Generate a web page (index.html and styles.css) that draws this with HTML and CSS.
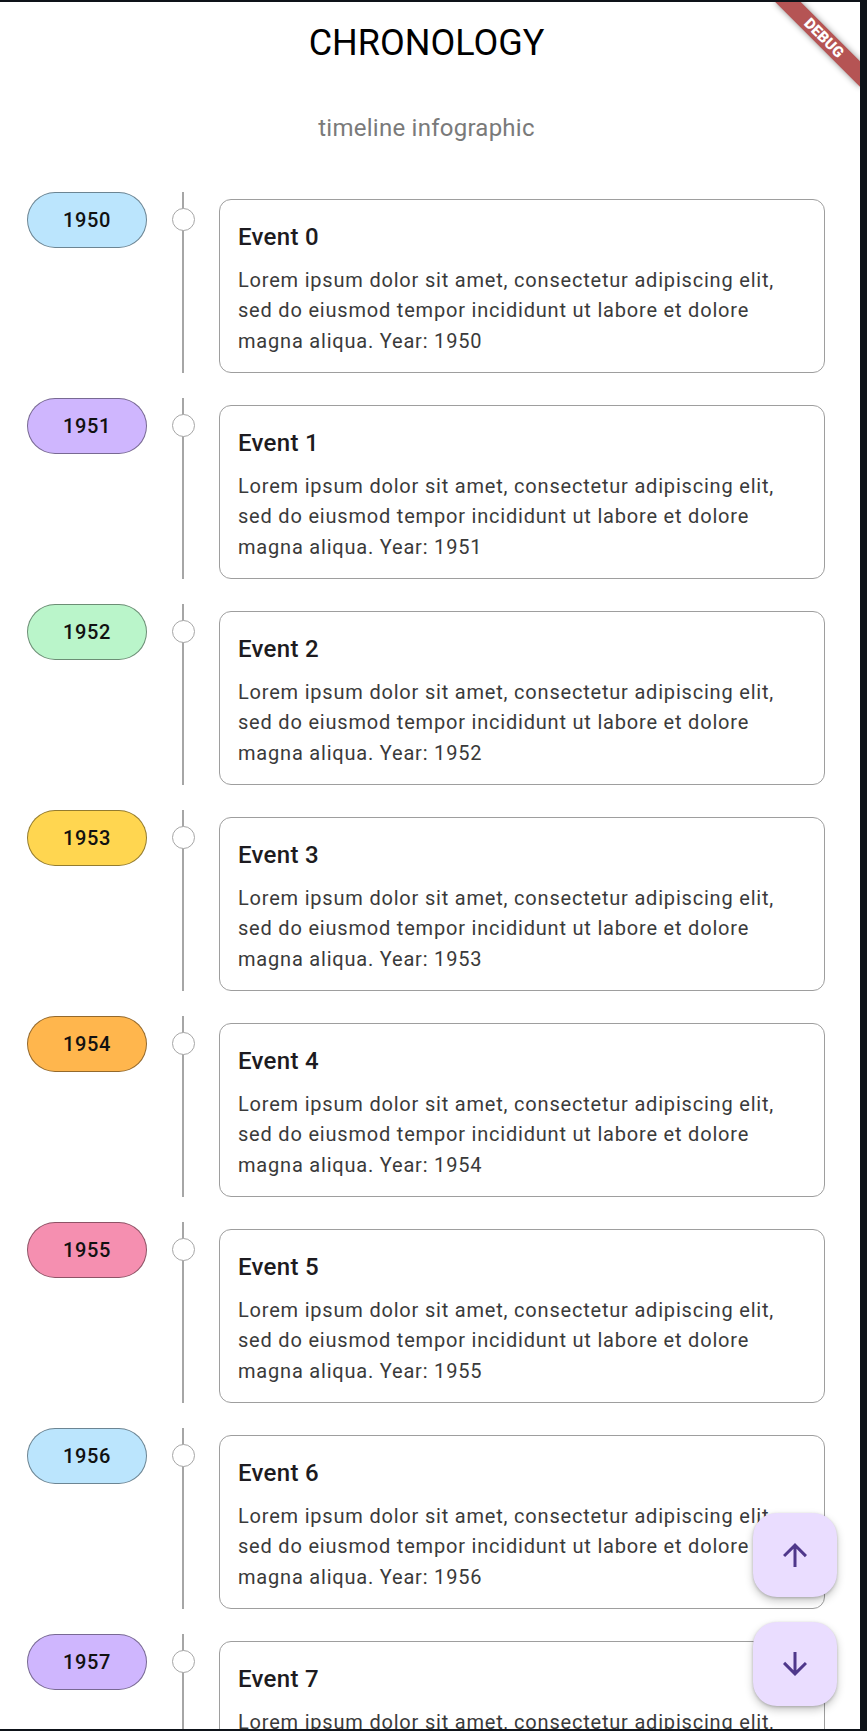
FILE: index.html
```html
<!DOCTYPE html>
<html lang="en">
<head>
<meta charset="utf-8">
<title>Chronology</title>
<link rel="stylesheet" href="styles.css">
</head>
<body>
<div class="app">
  <header class="header">
    <h1 class="title">CHRONOLOGY</h1>
    <p class="subtitle">timeline infographic</p>
  </header>

  <ul class="timeline">
    <li class="row">
      <div class="pill pill-blue">1950</div>
      <div class="axis"><span class="dot"></span></div>
      <article class="card">
        <h2 class="card-title">Event 0</h2>
        <p class="card-text">Lorem ipsum dolor sit amet, consectetur adipiscing elit, sed do eiusmod tempor incididunt ut labore et dolore magna aliqua. Year: 1950</p>
      </article>
    </li>
    <li class="row">
      <div class="pill pill-purple">1951</div>
      <div class="axis"><span class="dot"></span></div>
      <article class="card">
        <h2 class="card-title">Event 1</h2>
        <p class="card-text">Lorem ipsum dolor sit amet, consectetur adipiscing elit, sed do eiusmod tempor incididunt ut labore et dolore magna aliqua. Year: 1951</p>
      </article>
    </li>
    <li class="row">
      <div class="pill pill-green">1952</div>
      <div class="axis"><span class="dot"></span></div>
      <article class="card">
        <h2 class="card-title">Event 2</h2>
        <p class="card-text">Lorem ipsum dolor sit amet, consectetur adipiscing elit, sed do eiusmod tempor incididunt ut labore et dolore magna aliqua. Year: 1952</p>
      </article>
    </li>
    <li class="row">
      <div class="pill pill-amber">1953</div>
      <div class="axis"><span class="dot"></span></div>
      <article class="card">
        <h2 class="card-title">Event 3</h2>
        <p class="card-text">Lorem ipsum dolor sit amet, consectetur adipiscing elit, sed do eiusmod tempor incididunt ut labore et dolore magna aliqua. Year: 1953</p>
      </article>
    </li>
    <li class="row">
      <div class="pill pill-orange">1954</div>
      <div class="axis"><span class="dot"></span></div>
      <article class="card">
        <h2 class="card-title">Event 4</h2>
        <p class="card-text">Lorem ipsum dolor sit amet, consectetur adipiscing elit, sed do eiusmod tempor incididunt ut labore et dolore magna aliqua. Year: 1954</p>
      </article>
    </li>
    <li class="row">
      <div class="pill pill-pink">1955</div>
      <div class="axis"><span class="dot"></span></div>
      <article class="card">
        <h2 class="card-title">Event 5</h2>
        <p class="card-text">Lorem ipsum dolor sit amet, consectetur adipiscing elit, sed do eiusmod tempor incididunt ut labore et dolore magna aliqua. Year: 1955</p>
      </article>
    </li>
    <li class="row">
      <div class="pill pill-blue">1956</div>
      <div class="axis"><span class="dot"></span></div>
      <article class="card">
        <h2 class="card-title">Event 6</h2>
        <p class="card-text">Lorem ipsum dolor sit amet, consectetur adipiscing elit, sed do eiusmod tempor incididunt ut labore et dolore magna aliqua. Year: 1956</p>
      </article>
    </li>
    <li class="row">
      <div class="pill pill-purple">1957</div>
      <div class="axis"><span class="dot"></span></div>
      <article class="card">
        <h2 class="card-title">Event 7</h2>
        <p class="card-text">Lorem ipsum dolor sit amet, consectetur adipiscing elit, sed do eiusmod tempor incididunt ut labore et dolore magna aliqua. Year: 1957</p>
      </article>
    </li>
  </ul>

  <div class="fabs">
    <button class="fab" aria-label="Scroll up">
      <svg class="fab-icon" viewBox="0 0 24 24"><path d="M4 12l1.41 1.41L11 7.83V20h2V7.83l5.58 5.59L20 12l-8-8-8 8z"/></svg>
    </button>
    <button class="fab" aria-label="Scroll down">
      <svg class="fab-icon" viewBox="0 0 24 24"><path d="M20 12l-1.41-1.41L13 16.17V4h-2v12.17l-5.58-5.59L4 12l8 8 8-8z"/></svg>
    </button>
  </div>

  <div class="debug-banner"><span>DEBUG</span></div>
</div>
</body>
</html>
```

FILE: styles.css
```css
html, body {
  margin: 0;
  padding: 0;
}

body {
  background: #0e1319;
  overflow: hidden;
  font-family: Roboto, "Noto Sans", "Liberation Sans", sans-serif;
}

.app {
  position: relative;
  width: 860px;
  height: 1727px;
  margin-top: 2px;
  background: #ffffff;
  overflow: hidden;
}

.header {
  padding: 19px 7px 0 0;
  text-align: center;
}

.title {
  margin: 0;
  font-size: 36px;
  line-height: 44px;
  font-weight: 400;
  color: #000000;
}

.subtitle {
  margin: 47px 0 0;
  font-size: 24px;
  line-height: 32px;
  letter-spacing: 0.25px;
  color: #7a7a7a;
}

.timeline {
  list-style: none;
  margin: 48px 0 0;
  padding: 0 35px 0 27px;
  display: flex;
  flex-direction: column;
  gap: 24.75px;
}

.row {
  display: flex;
  align-items: flex-start;
}

.pill {
  flex: none;
  box-sizing: border-box;
  width: 120px;
  height: 56px;
  border-radius: 28px;
  border: 1.5px solid rgba(0, 0, 0, 0.42);
  display: flex;
  align-items: center;
  justify-content: center;
  font-size: 20px;
  font-weight: 500;
  letter-spacing: 0.6px;
  color: #111111;
}

.pill-blue { background: #bbe5fd; }
.pill-purple { background: #cfb6fe; }
.pill-green { background: #baf5ca; }
.pill-amber { background: #ffd650; }
.pill-orange { background: #ffb64d; }
.pill-pink { background: #f58fb0; }

.axis {
  flex: none;
  align-self: stretch;
  width: 72px;
  display: flex;
  justify-content: center;
  background: linear-gradient(#a6a6a6, #a6a6a6) center / 2px 100% no-repeat;
}

.dot {
  box-sizing: border-box;
  width: 23px;
  height: 23px;
  margin-top: 16px;
  border-radius: 50%;
  background: #ffffff;
  border: 1.5px solid #a6a6a6;
}

.card {
  flex: 1;
  margin-top: 7px;
  padding: 21px 24px 16px 18px;
  border: 1px solid #9e9e9e;
  border-radius: 12px;
  background: #ffffff;
}

.card-title {
  margin: 0;
  font-size: 24px;
  line-height: 32px;
  font-weight: 500;
  letter-spacing: 0.3px;
  color: #1d1b20;
}

.card-text {
  margin: 12px 0 0;
  font-size: 20px;
  line-height: 30.4px;
  letter-spacing: 0.8px;
  color: #3a3a3a;
}

.fabs {
  position: absolute;
  right: 23px;
  bottom: 23px;
  display: flex;
  flex-direction: column;
  gap: 25px;
}

.fab {
  width: 84px;
  height: 84px;
  border: none;
  padding: 0;
  border-radius: 24px;
  background: #eaddff;
  display: flex;
  align-items: center;
  justify-content: center;
  box-shadow: 0 4px 8px rgba(0, 0, 0, 0.22), 0 1px 3px rgba(0, 0, 0, 0.2);
}

.fab-icon {
  width: 36px;
  height: 36px;
  fill: #4f378b;
}

.debug-banner {
  position: absolute;
  left: 764px;
  top: 27px;
  width: 120px;
  height: 18px;
  transform: rotate(45deg);
  background: #b55454;
  box-shadow: 0 0 6px rgba(0, 0, 0, 0.45);
  display: flex;
  align-items: center;
  justify-content: center;
}

.debug-banner span {
  color: #ffffff;
  font-size: 15px;
  line-height: 18px;
  font-weight: 900;
  letter-spacing: 0.2px;
}
```
